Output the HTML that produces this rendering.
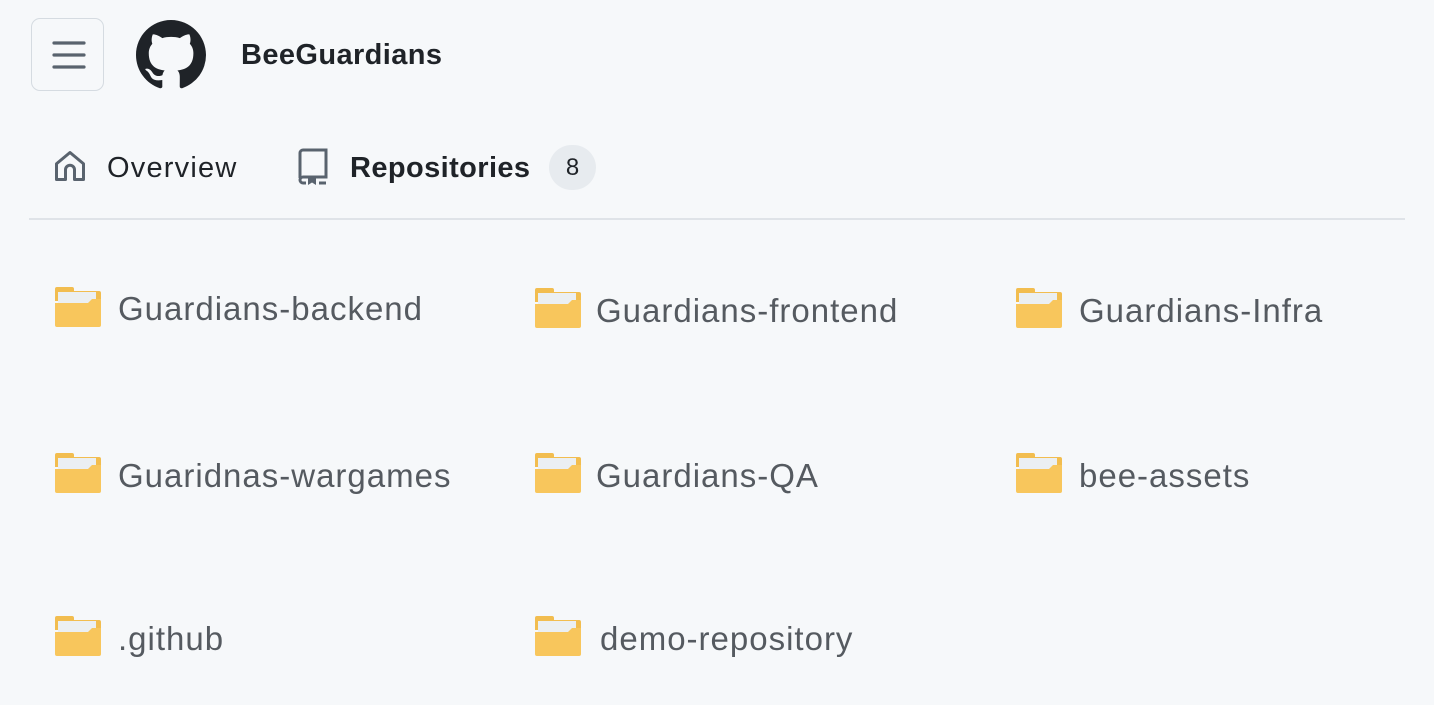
<!DOCTYPE html>
<html><head><meta charset="utf-8"><style>
body{margin:0;width:1434px;height:705px;background:#f6f8fa;font-family:"Liberation Sans",sans-serif;position:relative;overflow:hidden}
.a{position:absolute;white-space:nowrap}
.r{font-size:33px;letter-spacing:1px;color:#555a60;}
</style></head><body>
<div class="a" style="left:31px;top:18px;width:73px;height:73px;border:1.5px solid #d5dbe1;border-radius:9px;box-sizing:border-box;background:#f6f8fa"></div>
<svg class="a" style="left:52px;top:40px" width="34" height="30" viewBox="0 0 34 30"><g stroke="#59636e" stroke-width="3.2" stroke-linecap="round"><line x1="2" y1="3" x2="32" y2="3"/><line x1="2" y1="15" x2="32" y2="15"/><line x1="2" y1="27" x2="32" y2="27"/></g></svg>
<svg class="a" style="left:136px;top:20px" width="70" height="70" viewBox="0 0 16 16"><path fill="#1f2328" d="M8 0C3.58 0 0 3.58 0 8c0 3.54 2.29 6.53 5.47 7.59.4.07.55-.17.55-.38 0-.19-.01-.82-.01-1.49-2.01.37-2.53-.49-2.69-.94-.09-.23-.48-.94-.82-1.13-.28-.15-.68-.52-.01-.53.63-.01 1.08.58 1.23.82.72 1.21 1.87.87 2.33.66.07-.52.28-.87.51-1.07-1.780-.2-3.640-.89-3.640-3.950 0-.87.31-1.59.82-2.15-.08-.2-.36-1.02.08-2.12 0 0 .67-.21 2.2.82.64-.18 1.32-.27 2-.27.68 0 1.36.09 2 .27 1.53-1.04 2.2-.82 2.2-.82.44 1.1.16 1.92.08 2.12.51.56.82 1.27.82 2.15 0 3.07-1.87 3.75-3.65 3.95.29.25.54.73.54 1.48 0 1.07-.01 1.93-.01 2.2 0 .21.15.46.55.38A8.013 8.013 0 0016 8c0-4.42-3.58-8-8-8z"/></svg>
<div class="a" style="left:241px;top:39px;font-size:29px;letter-spacing:0.4px;font-weight:bold;color:#1f2328">BeeGuardians</div>
<svg class="a" style="left:52px;top:148px" width="36" height="36" viewBox="0 0 24 24"><path fill="none" stroke="#59636e" stroke-width="2" stroke-linejoin="round" d="M3 10.5L12 3l9 7.5V21h-6v-6.5a3 3 0 0 0-6 0V21H3z"/></svg>
<div class="a" style="left:107px;top:152px;font-size:29px;letter-spacing:1.2px;color:#1f2328">Overview</div>
<svg class="a" style="left:297px;top:148px" width="32" height="38" viewBox="0 0 32 38"><path fill="none" stroke="#59636e" stroke-width="3" d="M3 30V5a3 3 0 0 1 3-3h23v27H6a3 3 0 0 0-3 3 3 3 0 0 0 3 3h3M22 35h7"/><path fill="#59636e" d="M11 30h8v7l-4-2.5-4 2.5z"/></svg>
<div class="a" style="left:350px;top:152px;font-size:29px;letter-spacing:0.4px;font-weight:bold;color:#1f2328">Repositories</div>
<div class="a" style="left:549px;top:145px;width:47px;height:45px;border-radius:23px;background:#e7ebef;font-size:24px;color:#1f2328;text-align:center;line-height:45px">8</div>
<div class="a" style="left:29px;top:218px;width:1376px;height:2px;background:#dfe3e8"></div>
<svg width="0" height="0" style="position:absolute"><defs><g id="f"><path fill="#f2bd4f" d="M2 0h15a2 2 0 0 1 2 2v2h25a2 2 0 0 1 2 2v8H0V2a2 2 0 0 1 2-2z"/><rect x="3" y="5" width="38" height="13" fill="#ebeff2"/><path fill="#f8c65c" d="M0 16h33l4-4h9v26a2 2 0 0 1-2 2H2a2 2 0 0 1-2-2z"/></g></defs></svg>
<svg class="a" style="left:55px;top:287px" width="46" height="40"><use href="#f"/></svg>
<div class="a r" style="left:118px;top:290px">Guardians-backend</div>
<svg class="a" style="left:535px;top:288px" width="46" height="40"><use href="#f"/></svg>
<div class="a r" style="left:596px;top:292px">Guardians-frontend</div>
<svg class="a" style="left:1016px;top:288px" width="46" height="40"><use href="#f"/></svg>
<div class="a r" style="left:1079px;top:292px">Guardians-Infra</div>
<svg class="a" style="left:55px;top:453px" width="46" height="40"><use href="#f"/></svg>
<div class="a r" style="left:118px;top:457px">Guaridnas-wargames</div>
<svg class="a" style="left:535px;top:453px" width="46" height="40"><use href="#f"/></svg>
<div class="a r" style="left:596px;top:457px">Guardians-QA</div>
<svg class="a" style="left:1016px;top:453px" width="46" height="40"><use href="#f"/></svg>
<div class="a r" style="left:1079px;top:457px">bee-assets</div>
<svg class="a" style="left:55px;top:616px" width="46" height="40"><use href="#f"/></svg>
<div class="a r" style="left:118px;top:620px">.github</div>
<svg class="a" style="left:535px;top:616px" width="46" height="40"><use href="#f"/></svg>
<div class="a r" style="left:600px;top:620px">demo-repository</div>
</body></html>
